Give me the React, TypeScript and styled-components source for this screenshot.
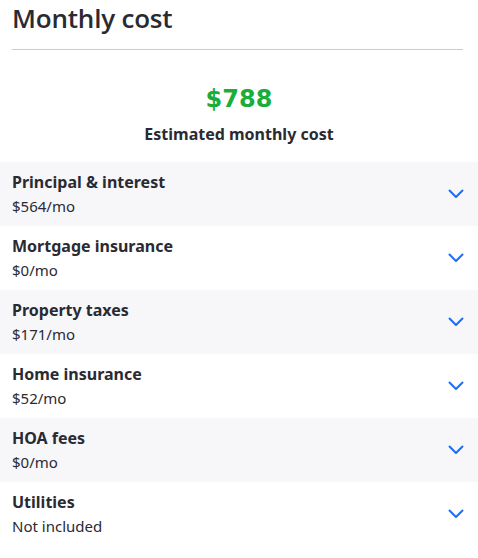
import styled, { createGlobalStyle } from "styled-components";

const GlobalStyle = createGlobalStyle`
  body {
    margin: 0;
    background: #ffffff;
    font-family: "Noto Sans", "Open Sans", sans-serif;
    color: #2a2a33;
  }
`;

const items = [
  { label: "Principal & interest", value: "$564/mo" },
  { label: "Mortgage insurance", value: "$0/mo" },
  { label: "Property taxes", value: "$171/mo" },
  { label: "Home insurance", value: "$52/mo" },
  { label: "HOA fees", value: "$0/mo" },
  { label: "Utilities", value: "Not included" },
];

const Chevron = () => (
  <svg width="16" height="10" viewBox="0 0 16 10" fill="none">
    <path
      d="M1.5 1.5 L8 8 L14.5 1.5"
      stroke="#1a6dff"
      strokeWidth="2"
      strokeLinecap="round"
      strokeLinejoin="round"
    />
  </svg>
);

export default function App() {
  return (
    <>
      <GlobalStyle />
      <Page>
        <Header>
          <Title>Monthly cost</Title>
        </Header>
        <Summary>
          <Total>$788</Total>
          <Caption>Estimated monthly cost</Caption>
        </Summary>
        <List>
          {items.map((item, i) => (
            <Row key={item.label} $shaded={i % 2 === 0}>
              <Text>
                <Label>{item.label}</Label>
                <Value>{item.value}</Value>
              </Text>
              <Chevron />
            </Row>
          ))}
        </List>
      </Page>
    </>
  );
}

const Page = styled.div`
  width: 478px;
`;

const Header = styled.div`
  margin: 0 15px 0 12px;
  padding-top: 1px;
  height: 48px;
  border-bottom: 1px solid #cccccc;
`;

const Title = styled.h1`
  margin: 0;
  font-family: "Open Sans", sans-serif;
  font-size: 26px;
  font-weight: 600;
  line-height: 34px;
  letter-spacing: -0.2px;
`;

const Summary = styled.div`
  display: flex;
  flex-direction: column;
  align-items: center;
  padding: 34px 0 16px;
`;

const Total = styled.div`
  font-family: "DejaVu Sans", sans-serif;
  font-size: 24px;
  font-weight: 700;
  color: #1aad3a;
  line-height: 30px;
`;

const Caption = styled.div`
  font-size: 16px;
  font-weight: 700;
  line-height: 24px;
  margin-top: 8px;
`;

const List = styled.div`
  display: flex;
  flex-direction: column;
`;

const Row = styled.div<{ $shaded: boolean }>`
  height: 64px;
  display: flex;
  align-items: center;
  justify-content: space-between;
  padding: 0 14px 0 12px;
  box-sizing: border-box;
  background: ${(p) => (p.$shaded ? "#f7f7fa" : "#ffffff")};
`;

const Text = styled.div`
  display: flex;
  flex-direction: column;
`;

const Label = styled.div`
  font-size: 16px;
  font-weight: 700;
  line-height: 24px;
`;

const Value = styled.div`
  font-size: 15px;
  line-height: 24px;
`;
